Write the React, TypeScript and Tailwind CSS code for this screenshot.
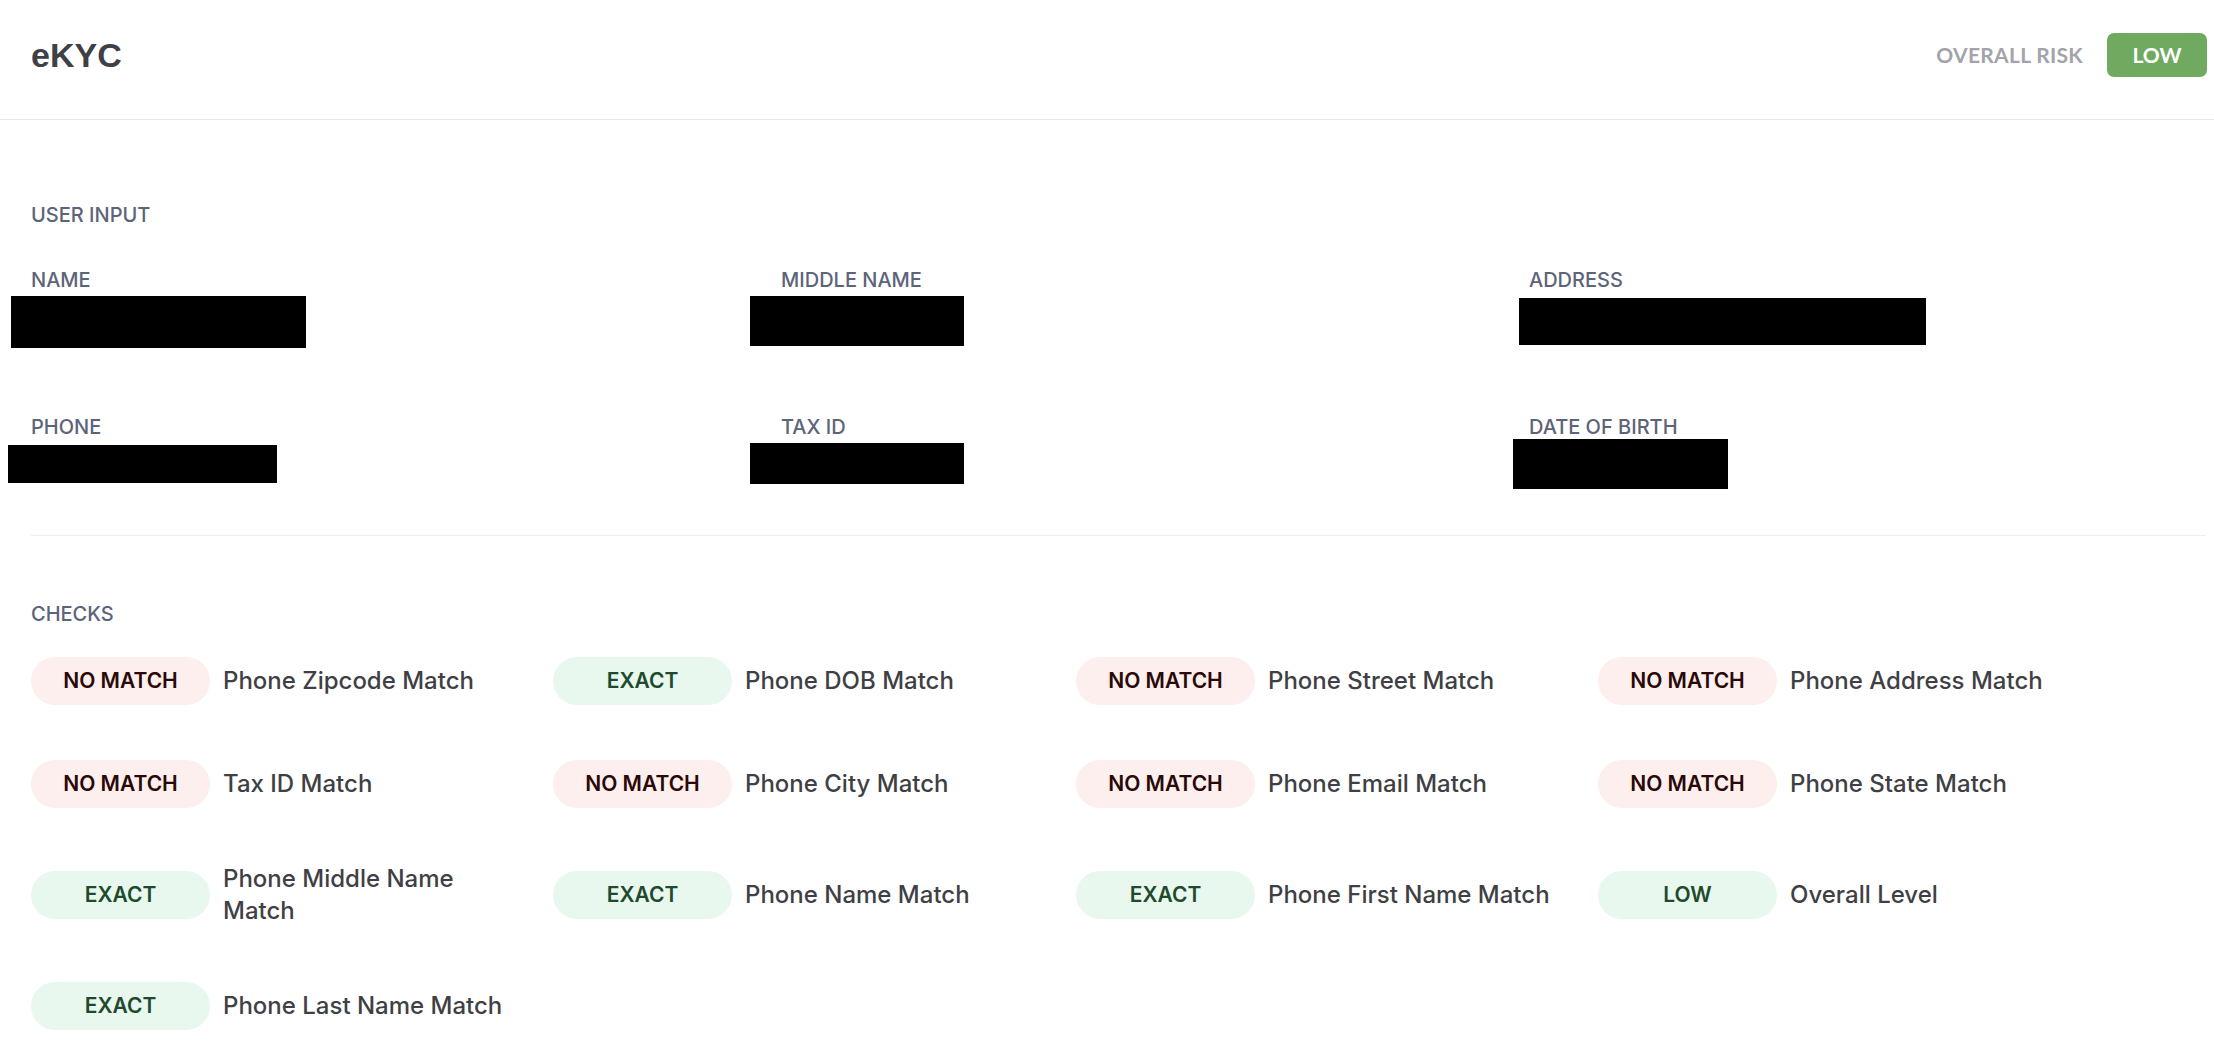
import React from "react";

type Status = "NO MATCH" | "EXACT" | "LOW";

interface Check {
  status: Status;
  label: string;
}

interface Field {
  label: string;
  // redaction block drawn over the value
  box: string;
}

const fields: Field[] = [
  { label: "NAME", box: "ml-[-20px] mt-[2px] w-[295px] h-[52px]" },
  { label: "MIDDLE NAME", box: "ml-[-31px] mt-[2px] w-[214px] h-[50px]" },
  { label: "ADDRESS", box: "ml-[-10px] mt-[4px] w-[407px] h-[47px]" },
  { label: "PHONE", box: "ml-[-23px] mt-[4px] w-[269px] h-[38px]" },
  { label: "TAX ID", box: "ml-[-31px] mt-[2px] w-[214px] h-[41px]" },
  { label: "DATE OF BIRTH", box: "ml-[-16px] mt-[-2px] w-[215px] h-[50px]" },
];

const checks: Check[] = [
  { status: "NO MATCH", label: "Phone Zipcode Match" },
  { status: "EXACT", label: "Phone DOB Match" },
  { status: "NO MATCH", label: "Phone Street Match" },
  { status: "NO MATCH", label: "Phone Address Match" },
  { status: "NO MATCH", label: "Tax ID Match" },
  { status: "NO MATCH", label: "Phone City Match" },
  { status: "NO MATCH", label: "Phone Email Match" },
  { status: "NO MATCH", label: "Phone State Match" },
  { status: "EXACT", label: "Phone Middle Name Match" },
  { status: "EXACT", label: "Phone Name Match" },
  { status: "EXACT", label: "Phone First Name Match" },
  { status: "LOW", label: "Overall Level" },
  { status: "EXACT", label: "Phone Last Name Match" },
];

function StatusPill({ status }: { status: Status }) {
  const bad = status === "NO MATCH";
  return (
    <div
      className={
        bad
          ? "flex h-[48px] w-[179px] flex-none items-center justify-center rounded-full bg-[#fcefed] text-[21px] font-semibold text-[#2b0808]"
          : "flex h-[48px] w-[179px] flex-none items-center justify-center rounded-full bg-[#e8f8ef] text-[21px] font-semibold text-[#1f4a2d]"
      }
    >
      {status}
    </div>
  );
}

export default function App() {
  return (
    <div className="min-h-screen bg-white font-['Inter',sans-serif] text-[#3f3f46]">
      <header className="flex items-center justify-between border-b border-[#e8e8ec] pl-[31px] pr-[7px] pt-[33px] pb-[42px]">
        <h1 className="font-['Liberation_Sans',Arial,sans-serif] text-[34px] font-bold leading-[44px] text-[#3f3f46]">
          eKYC
        </h1>
        <div className="flex items-center gap-[24px]">
          <span className="font-['Lato',sans-serif] text-[21px] font-bold tracking-[0.3px] text-[#a3a3ab]">
            OVERALL RISK
          </span>
          <span className="flex h-[44px] w-[100px] items-center justify-center rounded-[7px] bg-[#6faa60] font-['Lato',sans-serif] text-[21px] font-bold text-white">
            LOW
          </span>
        </div>
      </header>

      <main className="pl-[31px] pr-[8px] pt-[81px]">
        <section>
          <h2 className="text-[20px] font-medium leading-[28px] text-[#5d6379]">USER INPUT</h2>
          <div className="mt-[37px] grid grid-cols-[750px_748px_1fr] gap-y-[65px]">
            {fields.map((f) => (
              <div key={f.label} className="flex flex-col items-start">
                <span className="text-[20px] font-medium leading-[28px] text-[#5d6379]">{f.label}</span>
                <div className={`bg-black ${f.box}`} />
              </div>
            ))}
          </div>
        </section>

        <div className="mt-[46px] border-t border-[#ececef]" />

        <section className="pt-[64px] pb-[20px]">
          <h2 className="text-[20px] font-medium leading-[28px] text-[#5d6379]">CHECKS</h2>
          <div className="mt-[29px] grid grid-cols-[522px_523px_522px_1fr] gap-y-[55px]">
            {checks.map((c) => (
              <div key={c.label} className="flex items-center gap-[13px]">
                <StatusPill status={c.status} />
                <span className="max-w-[295px] text-[24px] font-medium leading-[32px] text-[#3f3f46]">
                  {c.label}
                </span>
              </div>
            ))}
          </div>
        </section>
      </main>
    </div>
  );
}
